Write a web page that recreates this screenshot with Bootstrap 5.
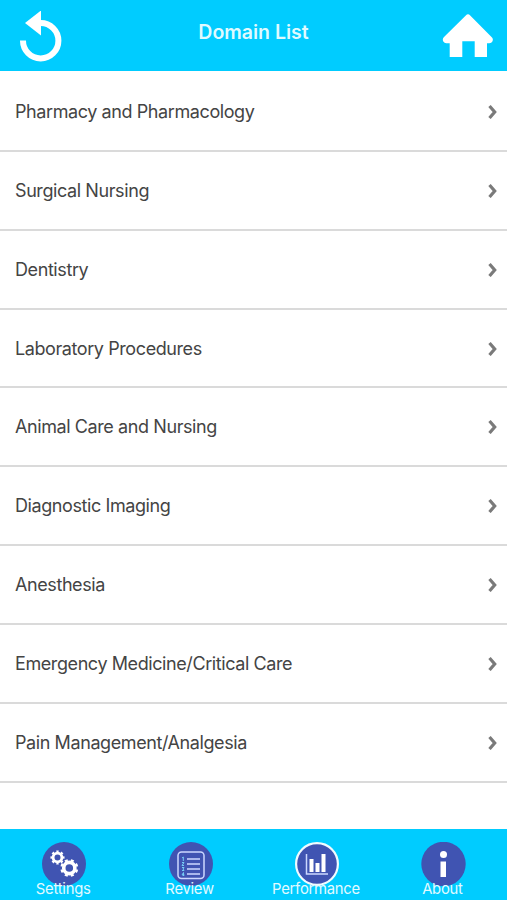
<!DOCTYPE html>
<html lang="en">
<head>
<meta charset="utf-8">
<meta name="viewport" content="width=device-width, initial-scale=1">
<title>Domain List</title>
<link href="https://cdn.jsdelivr.net/npm/bootstrap@5.3.0/dist/css/bootstrap.min.css" rel="stylesheet">
<style>
  body { font-family: Inter, "Liberation Sans", sans-serif; color: #444; }
  .screen { height: 900px; }
  .top-bar { background: #00ccff; height: 71px; padding: 11px 14px 0 20px; }
  .top-bar h1 { font-size: 19.5px; line-height: 24px; margin: 9px 0 0 4px; font-weight: 600; color: #dffaff; letter-spacing: 0; }
  .domains { padding-top: 2px; }
  .domains .list-group-item { height: 78.86px; padding: 0 10px 0 15px; border-width: 0 0 2px; border-color: #dadada; color: #444; font-size: 18px; letter-spacing: -.41px; }
  .domains .list-group-item:last-child { border-bottom-width: 2px; }
  .tab-bar { background: #00ccff; height: 71.5px; padding: 13.5px 0 0 1px; }
  .tab { width: 126.4px; color: #e2faff; font-size: 14.8px; line-height: 18px; letter-spacing: -.25px; }
  .tab svg { display: block; }
  .tab-label { margin: -6px 2px 0 0; position: relative; }
</style>
</head>
<body>
<div class="screen d-flex flex-column overflow-hidden bg-white">
  <header class="top-bar d-flex justify-content-between align-items-start flex-shrink-0">
    <svg width="42" height="51" viewBox="0 0 42 51" aria-label="Back" role="img">
      <path d="M3 29.5A17.7 17.7 0 1 0 20.5 12" fill="none" stroke="#fff" stroke-width="6"/>
      <path d="M5 12L21-.5V24.5Z" fill="#fff"/>
    </svg>
    <h1>Domain List</h1>
    <svg width="52" height="48" viewBox="0 0 52 48" aria-label="Home" role="img">
      <path d="M24.800 4.500Q27 2 29.200 4.500L51 26.500Q53 29 50.500 31.500Q49.500 32.500 47 32.200H46V46H33.700V30.300H21.300V46H8.700V32.200H6Q3.500 32.500 2.300 30.500Q1 28 3 26Z" fill="#fff"/>
    </svg>
  </header>
  <main class="flex-grow-1">
    <ul class="domains list-group list-group-flush" id="domains">
      <li class="list-group-item d-flex justify-content-between align-items-center">Pharmacy and Pharmacology</li>
      <li class="list-group-item d-flex justify-content-between align-items-center">Surgical Nursing</li>
      <li class="list-group-item d-flex justify-content-between align-items-center">Dentistry</li>
      <li class="list-group-item d-flex justify-content-between align-items-center">Laboratory Procedures</li>
      <li class="list-group-item d-flex justify-content-between align-items-center">Animal Care and Nursing</li>
      <li class="list-group-item d-flex justify-content-between align-items-center">Diagnostic Imaging</li>
      <li class="list-group-item d-flex justify-content-between align-items-center">Anesthesia</li>
      <li class="list-group-item d-flex justify-content-between align-items-center">Emergency Medicine/Critical Care</li>
      <li class="list-group-item d-flex justify-content-between align-items-center">Pain Management/Analgesia</li>
    </ul>
  </main>
  <nav class="tab-bar d-flex flex-shrink-0">
    <div class="tab d-flex flex-column align-items-center">
      <svg width="44" height="44" viewBox="0 0 44 44">
        <circle cx="22" cy="22" r="22" fill="#4054b2"/>
        <g fill="none" stroke="#fff">
          <circle cx="15.500" cy="15.500" r="4.400" stroke-width="2.800"/>
          <circle cx="15.500" cy="15.500" r="6.100" stroke-width="1.900" pathLength="16" stroke-dasharray="1 1" stroke-dashoffset=".5"/>
          <circle cx="27.300" cy="26" r="5.600" stroke-width="3.600"/>
          <circle cx="27.300" cy="26" r="7.900" stroke-width="2.200" pathLength="16" stroke-dasharray="1 1" stroke-dashoffset="1.500"/>
        </g>
      </svg>
      <span class="tab-label">Settings</span>
    </div>
    <div class="tab d-flex flex-column align-items-center">
      <svg width="44" height="44" viewBox="0 0 44 44">
        <circle cx="22" cy="22" r="22" fill="#4054b2"/>
        <g fill="none" stroke="#cbd7ff">
          <rect x="9" y="10" width="26" height="26.500" rx="3.500" stroke-width="1.500"/>
          <path d="M18 17H31M18 22H31M18 27H31M18 32H31" stroke-width="1.600"/>
          <path d="M13 16L14.300 15V19M13 20.500H15L13 23.500H15M13 25.500H15L14 27L15 28.500H13M14.500 34V30.500L13 33H15.500" stroke="#75cdf4" stroke-width="1"/>
        </g>
      </svg>
      <span class="tab-label">Review</span>
    </div>
    <div class="tab d-flex flex-column align-items-center">
      <svg width="44" height="44" viewBox="0 0 44 44">
        <circle cx="22" cy="22" r="20.900" fill="#4054b2" stroke="#effbff" stroke-width="2.200"/>
        <path d="M11.500 12V32H33" fill="none" stroke="#cbd7ff" stroke-width="1.500"/>
        <path d="M14.500 17H18.500V30H14.500ZM20.500 21H24.500V30H20.500ZM26.500 12H30.500V30H26.500Z" fill="#fff"/>
      </svg>
      <span class="tab-label">Performance</span>
    </div>
    <div class="tab d-flex flex-column align-items-center">
      <svg width="45" height="44" viewBox="0 0 45 44">
        <circle cx="22.500" cy="22" r="22.200" fill="#4054b2"/>
        <circle cx="22.500" cy="12.500" r="3.500" fill="#fff"/>
        <path d="M19.500 19.500H25V35H19.500Z" fill="#fff"/>
      </svg>
      <span class="tab-label">About</span>
    </div>
  </nav>
</div>
<script src="https://cdn.jsdelivr.net/npm/bootstrap@5.3.0/dist/js/bootstrap.bundle.min.js"></script>
<script>
  // Append the disclosure chevron to every row.
  document.querySelectorAll('#domains li').forEach(function (row) {
    row.insertAdjacentHTML('beforeend',
      '<svg width="9" height="15" viewBox="0 0 9 15" aria-hidden="true">' +
      '<path d="M1.500 2L6.700 8L1.500 14" fill="none" stroke="#7a7a7a" stroke-width="3.200"/></svg>');
  });
</script>
</body>
</html>
